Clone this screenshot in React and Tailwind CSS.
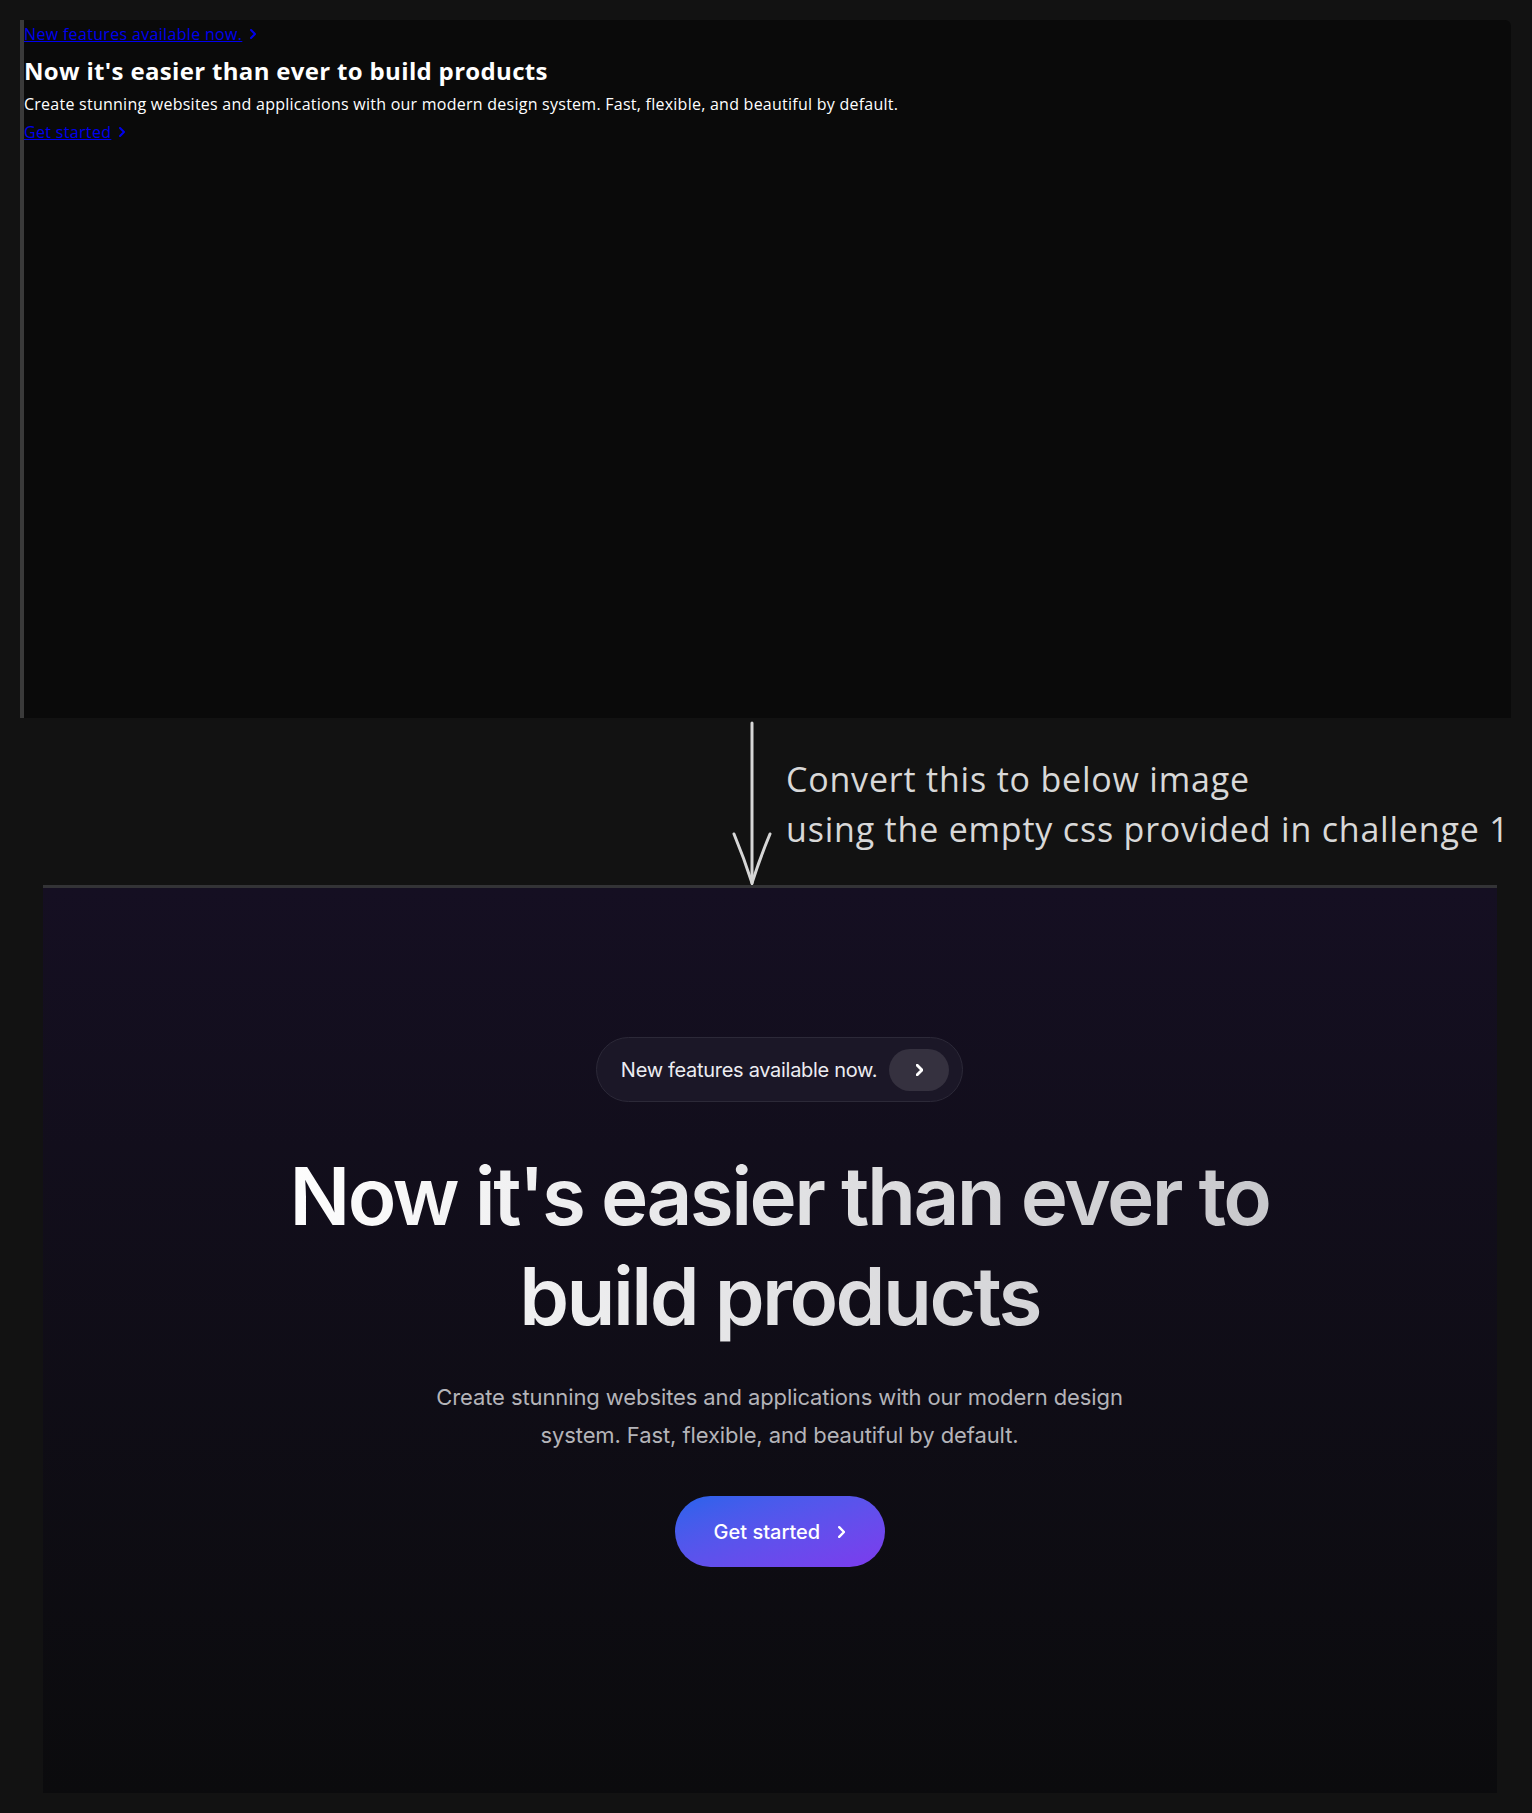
import React from 'react';

function Chevron({ className = '', size = 10, stroke = 2 }) {
  return (
    <svg
      width={size * 0.6}
      height={size}
      viewBox="0 0 6 10"
      fill="none"
      stroke="currentColor"
      strokeWidth={stroke}
      strokeLinecap="round"
      strokeLinejoin="round"
      className={className}
    >
      <path d="M1 1l4 4-4 4" />
    </svg>
  );
}

export default function App() {
  return (
    <div className="min-h-[1813px] bg-[#121212] pt-5">
      {/* Before: unstyled page */}
      <div
        className="ml-5 mr-[21px] h-[698px] bg-[#0a0a0a] border-l-4 border-[#3a3a3a] rounded-tr-md pt-1 text-white"
        style={{ fontFamily: '"Segoe UI", "Open Sans", "Noto Sans", sans-serif' }}
      >
        <a href="#" className="flex items-center gap-[8px] text-[16px] leading-[20px] tracking-[0.33px] text-[#0000ee] w-max">
          <span className="underline">New features available now. </span>
          <Chevron size={10} stroke={2} />
        </a>
        <h1 className="mt-3 text-[24px] leading-[30px] font-bold tracking-[0.33px]">Now it's easier than ever to build products</h1>
        <p className="mt-[8px] text-[16px] leading-[20px] tracking-[0.25px]">
          Create stunning websites and applications with our modern design system. Fast, flexible, and beautiful by default.
        </p>
        <a href="#" className="mt-[8px] flex items-center gap-[8px] text-[16px] leading-[20px] tracking-[0.33px] text-[#0000ee] w-max">
          <span className="underline">Get started </span>
          <Chevron size={10} stroke={2} />
        </a>
      </div>

      {/* Annotation */}
      <div className="h-[167px] flex pl-[732px]">
        <svg width="40" height="167" viewBox="0 0 40 167" fill="none" stroke="#d6d6d6" strokeWidth="3" strokeLinecap="round">
          <path d="M20 5 L20 165" />
          <path d="M2 116 Q12 140 20 165 Q28 140 38 116" />
        </svg>
        <div
          className="ml-[14px] mt-[36px] text-[34px] leading-[50px] font-normal tracking-[0.8px] text-[#d8d8d8]"
          style={{ fontFamily: '"Segoe UI", "Open Sans", "Noto Sans", sans-serif' }}
        >
          <div>Convert this to below image</div>
          <div>using the empty css provided in challenge 1</div>
        </div>
      </div>

      {/* After: styled hero */}
      <div
        className="ml-[43px] mr-[35px] h-[908px] border-t-[3px] border-[#333336] bg-linear-to-b from-[#150f22] to-[#0b0b0d] pt-[149px] pl-[19px] flex flex-col items-center"
        style={{ fontFamily: 'Inter, "Noto Sans", sans-serif' }}
      >
        <div className="h-[65px] flex items-center rounded-full border border-[#2c2938] bg-[#1b1727] pl-6 pr-[13px] gap-3">
          <span className="text-[20px] tracking-[-0.3px] text-[#ececf1]">New features available now.</span>
          <span className="w-[60px] h-[42px] rounded-full bg-[#35313f] flex items-center justify-center text-white">
            <Chevron size={12} stroke={2.4} />
          </span>
        </div>

        <h1 className="mt-[44px] max-w-[1040px] text-center text-[80px] leading-[100px] font-semibold tracking-[-0.032em] bg-linear-to-r from-white to-[#c6c6ca] bg-clip-text text-transparent">
          Now it's easier than ever to build products
        </h1>

        <p className="mt-8 max-w-[720px] text-center text-[22px] leading-[38px] tracking-[-0.1px] text-[#b4b4b9]">
          Create stunning websites and applications with our modern design system. Fast, flexible, and beautiful by default.
        </p>

        <button className="mt-[42px] w-[210px] h-[71px] rounded-full bg-linear-to-br from-[#2563eb] to-[#7c3aed] flex items-center justify-center gap-[18px] text-white text-[20px] font-medium">
          <span>Get started</span>
          <Chevron size={12} stroke={2} />
        </button>
      </div>
    </div>
  );
}
